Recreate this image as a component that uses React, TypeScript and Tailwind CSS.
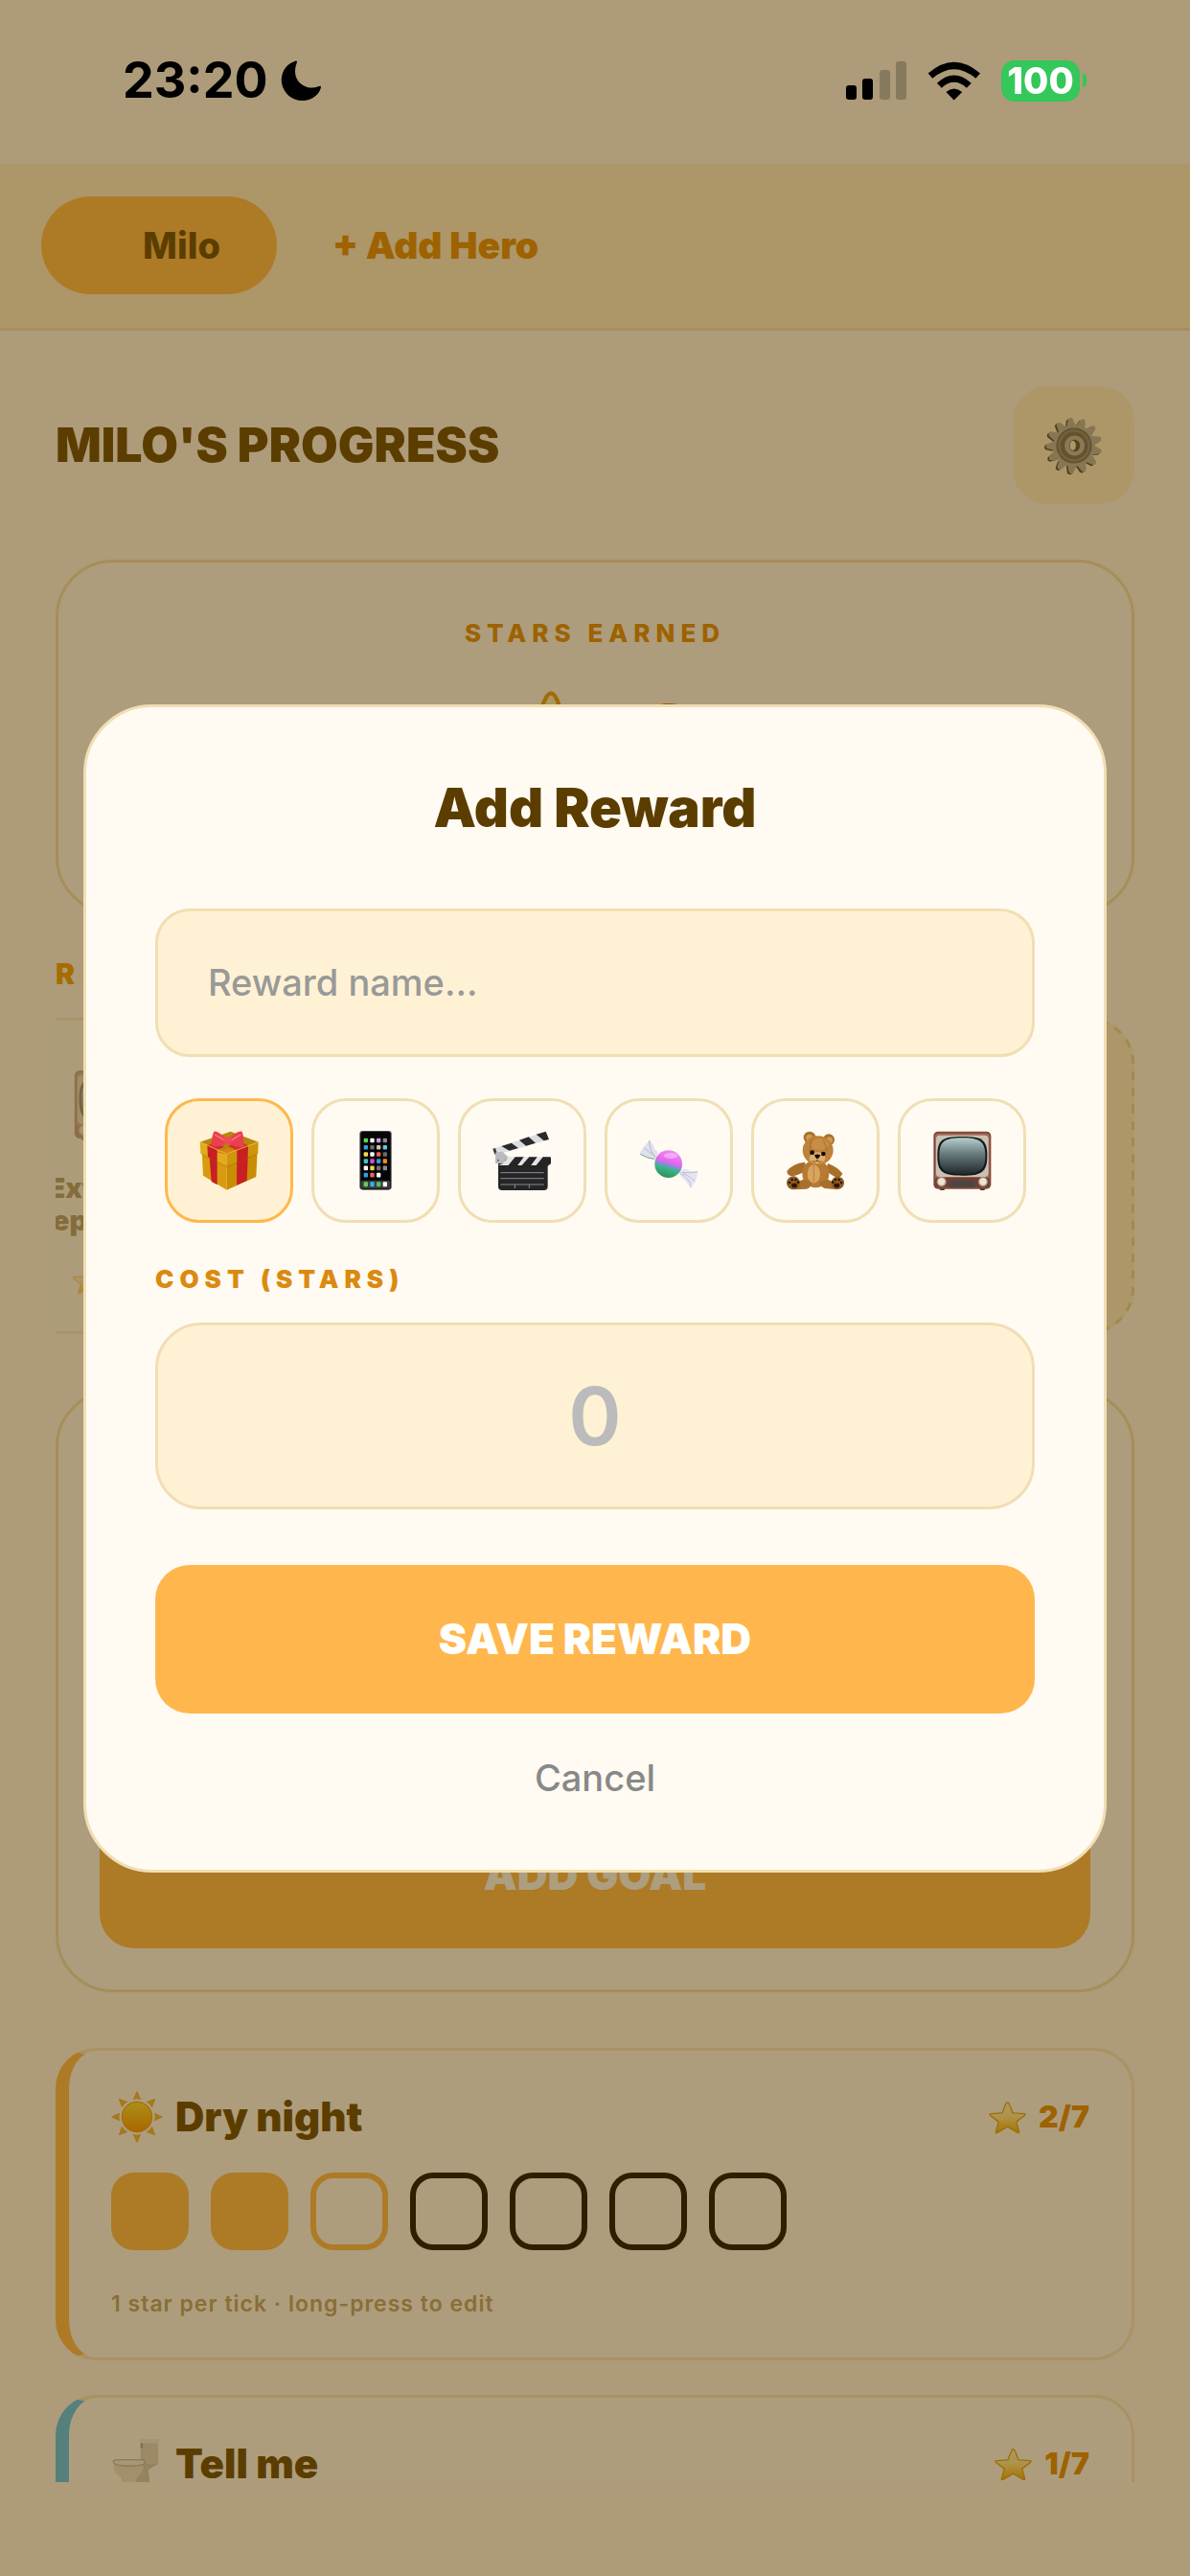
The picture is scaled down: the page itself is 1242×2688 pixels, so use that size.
import type { ReactNode } from "react";

type IconProps = { className?: string };

function Gift({ className }: IconProps) {
  return (
    <svg viewBox="170 175 190 192" className={className} aria-hidden="true">
      <path d="M180 240 L184 318 L258 363 L258 280 Z" fill="#d99a10" />
      <path d="M258 280 L258 363 L350 322 L354 240 Z" fill="#c98d05" />
      <path d="M174 213 L258 250 L258 290 L176 249 Z" fill="#e2ab1b" />
      <path d="M357 213 L258 250 L258 290 L356 249 Z" fill="#d0960b" />
      <path d="M174 213 L270 180 L357 213 L258 251 Z" fill="#b8860b" />
      <path d="M225 245 L260 232 L292 240 L258 252 Z" fill="#dd7f16" />
      <path d="M197 224 L228 238 L228 347 L210 337 L204 262 L199 260 Z" fill="#c91f24" />
      <path d="M290 239 L325 225 L324 263 L321 334 L289 348 Z" fill="#c91f24" />
      <path d="M197 224 L222 214 L250 228 L228 238 Z" fill="#d82c30" />
      <path d="M290 239 L262 226 L300 210 L325 225 Z" fill="#d82c30" />
      <path d="M174 213 L258 250 L357 213" fill="none" stroke="#f5cf48" strokeWidth="2" />
      <path d="M180 251 L258 291 L352 251" fill="none" stroke="#8d5f00" strokeWidth="2" opacity=".6" />
      <path d="M258 205 C240 186 222 174 217 182 C211 196 211 212 209 222 C222 229 244 228 258 218 Z" fill="#e8404e" />
      <path d="M262 205 C278 188 298 176 306 181 C312 194 309 214 313 227 C296 231 276 228 262 218 Z" fill="#e8404e" />
      <path d="M220 190 C232 196 243 202 250 208 M302 190 C290 196 280 202 272 208" fill="none" stroke="#ff7a80" strokeWidth="4" />
      <circle cx="260" cy="209" r="12" fill="#ee4b55" />
    </svg>
  );
}

const APP_ROWS = [
  ["#5fcf5a", "#ffffff", "#c99be0", "#8a8a8a"],
  ["#2e9fe8", "#6b6b6b", "#d8b9a0", "#5cc6ee"],
  ["#f5dd4a", "#ffffff", "#ef6155", "#6a6a6a"],
  ["#49c3c9", "#d24ad8", "#2f9ae5", "#ee8b12"],
  ["#ffffff", "#f2d64b", "#6e6e6e", "#8b8b8b"],
  ["#2e9fe8", "#ef6155", "#ffffff", "#050505"],
];

function Phone({ className }: IconProps) {
  return (
    <svg viewBox="629 175 190 192" className={className} aria-hidden="true">
      <rect x="674" y="178" width="100" height="185" rx="10" fill="#4a4a4e" />
      <rect x="677" y="181" width="94" height="179" rx="8" fill="#050505" />
      <rect x="678" y="333" width="92" height="26" rx="6" fill="#3b3b3d" />
      {APP_ROWS.map((row, r) =>
        row.map((fill, c) => (
          <rect key={`${r}-${c}`} x={687 + c * 20} y={201 + r * 21.7} width="13" height="14" rx="3" fill={fill} />
        ))
      )}
      {["#5fcf5a", "#2eb5e8", "#4fc75a", "#ffffff"].map((fill, c) => (
        <rect key={fill} x={687 + c * 20} y="338" width="13" height="15" rx="3" fill={fill} />
      ))}
    </svg>
  );
}

function Clapper({ className }: IconProps) {
  return (
    <svg viewBox="1087 175 190 192" className={className} aria-hidden="true">
      <path d="M1090 234 L1256 180 L1266 205 L1112 250 L1096 250 Z" fill="#dcdce0" />
      <path d="M1117 226 L1148 216 L1170 232 L1142 240 Z M1173 207 L1202 197 L1224 216 L1194 225 Z M1226 189 L1256 180 L1266 205 L1250 209 Z" fill="#2a2a2c" />
      <path d="M1090 234 L1098 232 L1104 250 L1096 252 Z" fill="#3a3a3c" />
      <path d="M1098 246 L1120 243 L1140 262 L1140 284 L1098 280 Z" fill="#b9babd" />
      <circle cx="1107" cy="270" r="3" fill="#666" />
      <circle cx="1131" cy="270" r="3" fill="#666" />
      <path d="M1107 280 H1262 V352 Q1262 364 1250 364 H1119 Q1107 364 1107 352 Z" fill="#252527" />
      <path d="M1140 260 H1268 Q1272 260 1272 264 V286 H1107 L1122 280 Z" fill="#e4e4e6" />
      <path d="M1160 260 H1187 L1167 287 H1138 Z M1204 260 H1229 L1209 287 H1180 Z M1247 260 H1268 Q1272 260 1272 264 V280 L1262 288 H1224 Z" fill="#252527" />
      <path d="M1114 309 H1250 M1114 327 H1250 M1114 346 H1250 M1159 346 V358 M1204 346 V358" stroke="#8d8d90" strokeWidth="3" />
    </svg>
  );
}

function Candy({ className }: IconProps) {
  return (
    <svg viewBox="137 175 190 192" className={className} aria-hidden="true">
      <defs>
        <linearGradient id="candyBall" x1=".65" y1="0" x2=".35" y2="1">
          <stop offset="0" stopColor="#f08cf5" />
          <stop offset=".42" stopColor="#e566ee" />
          <stop offset=".56" stopColor="#7d8fd6" />
          <stop offset=".64" stopColor="#3fb58c" />
          <stop offset="1" stopColor="#2b8f52" />
        </linearGradient>
      </defs>
      <path d="M140 250 Q152 226 172 207 Q184 220 190 238 Q202 240 196 262 L187 267 Q162 266 140 250 Z" fill="#dfe2ec" />
      <path d="M143 251 Q164 264 187 266" fill="none" stroke="#6fa98e" strokeWidth="3" />
      <path d="M172 208 Q168 236 190 260 M156 232 Q170 246 190 258" fill="none" stroke="#b4b8cb" strokeWidth="3" />
      <path d="M264 309 Q276 292 292 300 Q308 308 324 304 Q322 332 301 357 Q288 338 272 324 Z" fill="#e6e6f2" />
      <path d="M268 312 Q296 324 302 354 M272 308 Q298 312 322 306 M276 310 Q300 322 314 336" fill="none" stroke="#bcbdd6" strokeWidth="3" />
      <circle cx="231" cy="282" r="43" fill="url(#candyBall)" />
      <ellipse cx="238" cy="256" rx="22" ry="9" fill="#fff" opacity=".35" />
    </svg>
  );
}

function Bear({ className }: IconProps) {
  return (
    <svg viewBox="596 175 190 192" className={className} aria-hidden="true">
      <circle cx="673" cy="199" r="19" fill="#a8702c" />
      <circle cx="733" cy="206" r="18" fill="#a8702c" />
      <circle cx="673" cy="200" r="11" fill="#cf9a55" />
      <circle cx="735" cy="207" r="10" fill="#cf9a55" />
      <path d="M658 276 Q620 280 602 304 Q602 318 618 320 Q644 316 664 300 Z" fill="#a86f2b" />
      <path d="M730 280 Q762 292 776 312 Q770 326 756 324 Q736 314 724 302 Z" fill="#a86f2b" />
      <ellipse cx="692" cy="312" rx="42" ry="44" fill="#b57a33" />
      <path d="M652 330 Q624 340 622 362 L664 360 Q682 352 680 336 Z" fill="#a86f2b" />
      <path d="M730 330 Q758 340 760 362 L720 358 Q704 350 704 336 Z" fill="#a86f2b" />
      <ellipse cx="686" cy="313" rx="20" ry="29" fill="#d9a45f" />
      <path d="M686 286 V340" stroke="#a8702c" strokeWidth="2" />
      <circle cx="622" cy="341" r="21" fill="#8e5a22" />
      <circle cx="761" cy="341" r="20" fill="#8e5a22" />
      <g fill="#2a1608">
        <ellipse cx="625" cy="349" rx="9" ry="7" />
        <circle cx="610" cy="340" r="4" />
        <circle cx="618" cy="331" r="4" />
        <circle cx="629" cy="331" r="4" />
        <circle cx="637" cy="339" r="4" />
        <ellipse cx="758" cy="349" rx="9" ry="7" />
        <circle cx="746" cy="339" r="4" />
        <circle cx="754" cy="331" r="4" />
        <circle cx="765" cy="331" r="4" />
        <circle cx="772" cy="340" r="4" />
      </g>
      <ellipse cx="699" cy="239" rx="48" ry="45" fill="#bd8139" />
      <ellipse cx="704" cy="220" rx="28" ry="18" fill="#cf944b" opacity=".7" />
      <path d="M680 204 Q670 232 676 262 M716 206 L728 240" fill="none" stroke="#94602a" strokeWidth="2" />
      <ellipse cx="697" cy="263" rx="25" ry="18" fill="#e0ae6b" />
      <circle cx="681" cy="246" r="7" fill="#120b06" />
      <circle cx="716" cy="250" r="7" fill="#120b06" />
      <path d="M688 253 Q698 249 707 254 Q704 264 697 266 Q690 262 688 253 Z" fill="#1a0f08" />
      <path d="M697 266 V272 Q688 278 681 272 M697 272 Q704 278 711 273" fill="none" stroke="#6b4015" strokeWidth="2.5" />
    </svg>
  );
}

function Tv({ className }: IconProps) {
  return (
    <svg viewBox="1055 175 190 192" className={className} aria-hidden="true">
      <defs>
        <linearGradient id="tvScreen" x1="0" y1="0" x2="0" y2="1">
          <stop offset="0" stopColor="#b4cfcd" />
          <stop offset=".45" stopColor="#67797b" />
          <stop offset="1" stopColor="#202a2d" />
        </linearGradient>
      </defs>
      <rect x="1080" y="350" width="16" height="14" rx="4" fill="#4d2a20" />
      <rect x="1206" y="350" width="16" height="14" rx="4" fill="#4d2a20" />
      <rect x="1061" y="180" width="180" height="180" rx="14" fill="#82493a" />
      <rect x="1066" y="186" width="170" height="168" rx="10" fill="#a2695a" />
      <rect x="1069" y="192" width="164" height="130" rx="12" fill="#c9c2b2" />
      <path d="M1151 196 C1214 196 1229 206 1229 256 C1229 306 1214 318 1151 318 C1088 318 1073 306 1073 256 C1073 206 1088 196 1151 196 Z" fill="#14191a" />
      <path d="M1151 200 C1208 200 1223 212 1223 256 C1223 300 1208 313 1151 313 C1094 313 1079 300 1079 256 C1079 212 1094 200 1151 200 Z" fill="url(#tvScreen)" />
      <rect x="1066" y="324" width="170" height="30" rx="6" fill="#6d4035" />
      <path d="M1118 334 H1184 L1192 354 H1110 Z" fill="#4a4543" />
      <circle cx="1086" cy="338" r="15" fill="#a79a87" />
      <circle cx="1086" cy="337" r="11" fill="#ece4d2" />
      <circle cx="1216" cy="338" r="15" fill="#a79a87" />
      <circle cx="1216" cy="337" r="11" fill="#ece4d2" />
    </svg>
  );
}

function Star({ className }: IconProps) {
  return (
    <svg viewBox="88 186 124 112" className={className} aria-hidden="true">
      <defs>
        <linearGradient id="starFill" x1="0" y1="0" x2="0" y2="1">
          <stop offset="0" stopColor="#fdf3c4" />
          <stop offset=".45" stopColor="#ffeb96" />
          <stop offset="1" stopColor="#f5a800" />
        </linearGradient>
      </defs>
      <path
        d="M150 194 Q154 194 158 206 L167 228 L203 230 Q208 231 205 235 L178 256 L187 288 Q186 292 182 290 L150 271 L118 290 Q113 292 113 288 L122 256 L95 235 Q92 231 97 230 L133 228 L142 206 Q146 194 150 194 Z"
        fill="url(#starFill)"
        stroke="#e39a12"
        strokeWidth="4"
        strokeLinejoin="round"
      />
    </svg>
  );
}

function Sun({ className }: IconProps) {
  return (
    <svg viewBox="-50 -50 100 100" className={className} aria-hidden="true">
      <defs>
        <linearGradient id="sunFill" x1="0" y1="0" x2="0" y2="1">
          <stop offset="0" stopColor="#ffe02e" />
          <stop offset="1" stopColor="#f59200" />
        </linearGradient>
      </defs>
      {[0, 45, 90, 135, 180, 225, 270, 315].map((angle) => (
        <path key={angle} d="M-7 -34 L0 -49 L7 -34 Q0 -37 -7 -34 Z" fill="#f7b32b" stroke="#e0960f" strokeWidth="1" transform={`rotate(${angle})`} />
      ))}
      <circle r="29" fill="url(#sunFill)" stroke="#ee9b0f" strokeWidth="2" />
    </svg>
  );
}

function Toilet({ className }: IconProps) {
  return (
    <svg viewBox="0 0 100 100" className={className} aria-hidden="true">
      <rect x="57" y="6" width="34" height="46" rx="3" fill="#ddd5cc" />
      <rect x="54" y="2" width="39" height="8" rx="3" fill="#f0eae4" />
      <rect x="57" y="10" width="4" height="10" fill="#a39b93" />
      <path d="M60 50 H90 L72 62 L76 98 H24 L20 76 Z" fill="#cfc6bc" />
      <path d="M5 50 H62 Q64 68 50 76 L46 98 H24 L20 77 Q4 68 5 50 Z" fill="#e9e2da" />
      <path d="M4 46 Q4 42 12 42 H58 Q66 42 66 47 Q64 54 36 54 Q6 54 4 46 Z" fill="#f4efe9" stroke="#ada49b" strokeWidth="2" />
    </svg>
  );
}

function Gear({ className }: IconProps) {
  const teeth = Array.from({ length: 13 }, (_, i) => (i * 360) / 13 - 8);
  return (
    <svg viewBox="-50 -50 100 100" className={className} aria-hidden="true">
      <g transform="translate(-3 2)">
        {teeth.map((a) => (
          <path key={a} d="M-7 -32 L-4 -45 Q0 -49 4 -45 L7 -32 Z" fill="#4a4038" transform={`rotate(${a})`} />
        ))}
      </g>
      {teeth.map((a) => (
        <path key={a} d="M-8 -32 L-4 -45 Q0 -50 4 -45 L8 -32 Z" fill="#b3aea8" transform={`rotate(${a})`} />
      ))}
      <circle r="35" fill="#b3aea8" />
      <circle r="30" fill="#6d665e" />
      <circle r="27" fill="#8c857c" />
      <circle r="23" fill="#6d665e" />
      <circle cx="1" r="17" fill="#b9b4ad" />
      <ellipse cx="1" rx="9" ry="10" fill="#55493d" />
      <ellipse cx="-2" rx="5" ry="8" fill="#fff0d0" />
    </svg>
  );
}

function StatusBar() {
  return (
    <div className="relative z-20 flex h-[171px] shrink-0 items-start justify-between pt-[52px] pr-[108px] pl-[128px] text-black">
      <div className="flex h-16 items-center gap-[13px]">
        <span className="text-[52px] font-bold leading-[64px]">23:20</span>
        <svg viewBox="0 0 44 44" className="size-[43px]" aria-hidden="true">
          <path d="M15 1 C3 5 0 16 1 24 C3 36 13 43 23 43 C33 43 41 37 43 29 C43 27 42 27 40 28 C27 33 10 22 17 3 C18 1 17 0 15 1 Z" fill="#000" />
        </svg>
      </div>
      <div className="flex h-16 items-center">
        <svg viewBox="0 0 63 42" className="mr-[22px] h-[42px] w-[63px]" aria-hidden="true">
          <rect x="0" y="26" width="11" height="15" rx="3" />
          <rect x="17" y="19" width="11" height="22" rx="3" />
          <rect x="35" y="10" width="11" height="31" rx="3" opacity=".22" />
          <rect x="52" y="1" width="11" height="40" rx="3" opacity=".22" />
        </svg>
        <svg viewBox="318 66 170 124" className="mr-[21px] h-[41px] w-[56px]" aria-hidden="true">
          <path d="M320 104 Q402 32 485 104 L471 120 Q402 62 334 120 Z" />
          <path d="M348 135 Q402 84 457 135 L442 150 Q402 114 363 150 Z" />
          <path d="M377 163 Q402 141 428 163 L402 189 Z" />
        </svg>
        <div className="flex items-center gap-[3px]">
          <span className="flex h-[43px] w-[82px] items-center justify-center rounded-[14px] bg-[#34C759] text-[38px] font-extrabold leading-none text-white">
            100
          </span>
          <span className="h-[14px] w-[4px] rounded-r-full bg-[#34C759]" />
        </div>
      </div>
    </div>
  );
}

type TickState = "done" | "next" | "empty";

function Tick({ state, label }: { state: TickState; label: string }) {
  const look =
    state === "done"
      ? "border-[#FFB74D] bg-[#FFB74D]"
      : state === "next"
        ? "border-[#FFB74D]"
        : "border-black";
  return <button type="button" aria-label={label} className={`size-[81px] rounded-[24px] border-[6px] ${look}`} />;
}

function HabitCard({
  icon,
  name,
  done,
  accent,
}: {
  icon: ReactNode;
  name: string;
  done: number;
  accent: string;
}) {
  return (
    <article
      className={`rounded-[42px] border-[3px] border-l-[14px] border-[#F6E7C6] bg-[#FFFDF9] pt-[42px] pr-[44px] pb-[38px] pl-[44px] ${accent}`}
    >
      <div className="flex h-[54px] items-center justify-between">
        <h3 className="flex items-center gap-[13px] text-[42px] font-black leading-[54px] text-[#5C3D00]">
          {icon}
          {name}
        </h3>
        <p className="flex items-center gap-3 text-[32px] font-black leading-[54px] text-[#E08600]">
          <Star className="h-[37px] w-[41px]" />
          {done}/7
        </p>
      </div>
      <div className="mt-[31px] flex gap-[23px]">
        {Array.from({ length: 7 }, (_, i) => (
          <Tick
            key={i}
            label={`${name} tick ${i + 1}`}
            state={i < done ? "done" : i === done ? "next" : "empty"}
          />
        ))}
      </div>
      <p className="mt-[38px] text-[23px] font-semibold leading-[36px] tracking-[1px] text-[#B69E70]">
        1 star per tick · long-press to edit
      </p>
    </article>
  );
}

const REWARD_ICONS = [
  { name: "Gift", Icon: Gift },
  { name: "Phone", Icon: Phone },
  { name: "Film", Icon: Clapper },
  { name: "Candy", Icon: Candy },
  { name: "Bear", Icon: Bear },
  { name: "TV", Icon: Tv },
];

function AddRewardDialog() {
  return (
    <div className="fixed inset-0 z-10 flex items-center justify-center bg-[#5C3D00]/50 px-[87px]">
      <form
        role="dialog"
        aria-modal="true"
        aria-labelledby="dialog-title"
        className="flex w-full flex-col rounded-[72px] border-[3px] border-[#F0DFB4] bg-[#FFFBF2] p-[72px]"
      >
        <h2 id="dialog-title" className="text-center text-[56px] font-black leading-[66px] text-[#5C3D00]">
          Add Reward
        </h2>
        <input
          type="text"
          aria-label="Reward name"
          placeholder="Reward name..."
          className="mt-[72px] h-[155px] w-full rounded-[36px] border-[3px] border-[#F0DFB4] bg-[#FFF2D4] px-[52px] text-[38px] font-medium text-[#5C3D00] outline-none placeholder:text-[#999999]"
        />
        <div className="mt-[43px] flex justify-center gap-[19px]">
          {REWARD_ICONS.map(({ name, Icon }, i) => (
            <button
              key={name}
              type="button"
              aria-label={name}
              aria-pressed={i === 0}
              className={`flex h-[130px] w-[134px] items-center justify-center rounded-[36px] border-[3px] ${
                i === 0 ? "border-[#FFB74D] bg-[#FFF2D4]" : "border-[#F0DFB4]"
              }`}
            >
              <Icon className="size-[64px]" />
            </button>
          ))}
        </div>
        <label htmlFor="cost" className="mt-[41px] text-[26px] font-black leading-[36px] tracking-[6px] text-[#DB8A10]">
          COST (STARS)
        </label>
        <input
          id="cost"
          type="text"
          inputMode="numeric"
          placeholder="0"
          className="mt-[27px] h-[195px] w-full rounded-[48px] border-[3px] border-[#F0DFB4] bg-[#FFF2D4] text-center text-[84px] font-semibold text-[#5C3D00] outline-none placeholder:text-[#BBBBBB]"
        />
        <button
          type="submit"
          className="mt-[58px] h-[155px] w-full rounded-[36px] bg-[#FFB74D] text-[44px] font-black text-white"
        >
          SAVE REWARD
        </button>
        <button type="button" className="mt-[43px] self-center text-[38px] font-medium leading-[48px] text-[#888888]">
          Cancel
        </button>
      </form>
    </div>
  );
}

export default function App() {
  return (
    <div className="flex h-screen flex-col bg-[#FFF9F2] font-['Inter','Liberation_Sans',sans-serif]">
      <StatusBar />
      <nav className="flex shrink-0 items-center gap-[58px] border-b-[3px] border-[#F0DFB4] bg-[#FFEFD0] px-[43px] pt-[34px] pb-[35px]">
        <button
          type="button"
          className="flex h-[102px] w-[246px] items-center justify-end rounded-[51px] bg-[#FFB74D] pr-[59px] text-[38px] font-extrabold text-[#5C3D00]"
        >
          Milo
        </button>
        <button type="button" className="text-[39px] font-black text-[#E08600]">
          + Add Hero
        </button>
      </nav>

      <main className="min-h-0 flex-1 overflow-hidden px-[58px] pt-[58px]">
        <header className="flex h-[123px] items-center justify-between">
          <h1 className="text-[50px] font-black text-[#5C3D00]">MILO'S PROGRESS</h1>
          <button
            type="button"
            aria-label="Settings"
            className="flex h-[123px] w-[127px] items-center justify-center rounded-[36px] bg-[#FFEFD0]"
          >
            <Gear className="size-[62px]" />
          </button>
        </header>

        <section className="mt-[58px] h-[370px] rounded-[60px] border-[3px] border-[#F0DFB4] bg-[#FFFDF9] pt-[56px] text-center">
          <h2 className="text-[26px] font-extrabold leading-[36px] tracking-[6px] text-[#E08600]">STARS EARNED</h2>
          <p className="mt-[22px] flex h-[150px] items-center justify-center gap-[18px] text-[112px] font-extrabold leading-[150px] text-[#EF6C00]">
            <Star className="h-[130px] w-[136px]" />8
          </p>
        </section>

        <h2 className="mt-[44px] text-[30px] font-black leading-[36px] tracking-[8px] text-[#F09A00]">REWARDS</h2>
        <section className="mt-[28px] flex h-[330px] justify-between overflow-hidden">
          <div className="-ml-[65px] flex w-[240px] flex-col items-center rounded-[48px] border-[3px] border-[#F0DFB4] bg-[#FFFDF9] pt-[50px] text-center opacity-50">
            <Tv className="size-[76px]" />
            <p className="mt-[32px] text-[29px] font-black leading-[34px] text-[#5C3D00]">
              Extra TV
              <br />
              episode
            </p>
            <p className="mt-[28px] flex items-center gap-2 text-[26px] font-bold leading-[34px] text-[#E08600]">
              <Star className="size-[34px]" />
              20
            </p>
          </div>
          <button type="button" aria-label="Add reward" className="w-[240px] rounded-[48px] bg-[#FFEFD0]">
            <svg viewBox="0 0 240 330" className="block size-full" aria-hidden="true">
              <rect
                x="1.5"
                y="1.5"
                width="237"
                height="327"
                rx="46.5"
                fill="none"
                stroke="#EAD3A0"
                strokeWidth="3"
                strokeDasharray="9 8.3"
              />
            </svg>
          </button>
        </section>

        <section className="mt-[58px] flex h-[629px] flex-col justify-end rounded-[60px] border-[3px] border-[#F0DFB4] bg-[#FFFDF9] p-[43px]">
          <button type="button" className="h-[155px] w-full rounded-[36px] bg-[#FFB74D] text-[44px] font-black text-white">
            ADD GOAL
          </button>
        </section>

        <section className="mt-[58px] flex flex-col gap-[36px]">
          <HabitCard icon={<Sun className="size-[54px]" />} name="Dry night" done={2} accent="border-l-[#FFB74D]" />
          <HabitCard icon={<Toilet className="size-[54px]" />} name="Tell me" done={1} accent="border-l-[#4FC3F7]" />
        </section>
      </main>
      <footer className="h-[98px] shrink-0" />
      <AddRewardDialog />
    </div>
  );
}
